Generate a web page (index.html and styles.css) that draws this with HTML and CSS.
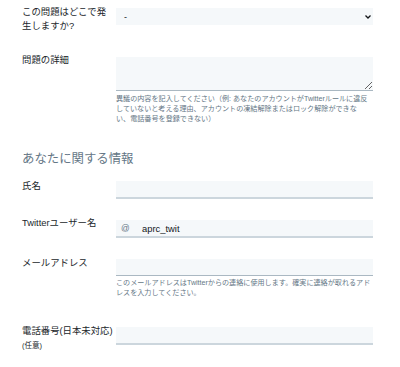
FILE: index.html
```html
<!DOCTYPE html>
<html lang="ja">
<head>
<meta charset="utf-8">
<link rel="stylesheet" href="styles.css">
</head>
<body>
<div class="form">
  <div class="row r1">
    <label class="lbl">この問題はどこで発<br>生しますか?</label>
    <div class="field f1">
      <div class="select-wrap">
        <select class="select"><option>-</option></select>
        <svg class="chev" width="6" height="4" viewBox="0 0 6 4"><path d="M0.5 0.5 L3 3 L5.5 0.5" fill="none" stroke="#14171a" stroke-width="1.3"/></svg>
      </div>
    </div>
  </div>

  <div class="row r2">
    <label class="lbl">問題の詳細</label>
    <div class="field f2">
      <textarea class="textarea"></textarea>
      <p class="help">異議の内容を記入してください（例: あなたのアカウントがTwitterルールに違反<br>していないと考える理由、アカウントの凍結解除またはロック解除ができな<br>い、電話番号を登録できない）</p>
    </div>
  </div>

  <h2 class="heading">あなたに関する情報</h2>

  <div class="row r3">
    <label class="lbl">氏名</label>
    <div class="field f3"><div class="input thick"></div></div>
  </div>

  <div class="row r4">
    <label class="lbl">Twitterユーザー名</label>
    <div class="field f4"><div class="input thick user"><span class="at">@</span><span class="uname">aprc_twit</span></div></div>
  </div>

  <div class="row r5">
    <label class="lbl">メールアドレス</label>
    <div class="field f5">
      <div class="input thin"></div>
      <p class="help h2">このメールアドレスはTwitterからの連絡に使用します。確実に連絡が取れるアド<br>レスを入力してください。</p>
    </div>
  </div>

  <div class="row r6">
    <label class="lbl">電話番号(日本未対応)<span class="opt">(任意)</span></label>
    <div class="field f6"><div class="input thick"></div></div>
  </div>
</div>
</body>
</html>
```

FILE: styles.css
```css
html, body {
  margin: 0;
  padding: 0;
  background: #ffffff;
}
body {
  font-family: "Liberation Sans", "Noto Sans CJK JP", sans-serif;
  color: #14171a;
  width: 400px;
  height: 367px;
  overflow: hidden;
}
.form {
  padding: 5px 0 0 22px;
}
.row {
  display: grid;
  grid-template-columns: 94px 257px;
  align-items: start;
}
.lbl {
  display: block;
  font-size: 9.4px;
  line-height: 14px;
  color: #22272b;
}
.opt {
  display: block;
  font-size: 7.5px;
  line-height: 16px;
}
.field {
  display: flex;
  flex-direction: column;
}
.select-wrap {
  position: relative;
  height: 17px;
}
.select {
  appearance: none;
  -webkit-appearance: none;
  display: block;
  width: 100%;
  height: 17px;
  margin: 0;
  border: none;
  background: #f5f8fa;
  padding: 0 0 0 8px;
  font-family: inherit;
  font-size: 9px;
  color: #14171a;
  outline: none;
}
.chev {
  position: absolute;
  right: 2px;
  top: 7px;
}
.f1 { margin-top: 3px; }
.r2 { margin-top: 20px; }
.f2 { margin-top: 4px; }
.textarea {
  display: block;
  box-sizing: border-box;
  width: 257px;
  height: 34px;
  margin: 0;
  border: none;
  border-bottom: 1px solid #aab8c2;
  background: #f5f8fa;
  resize: vertical;
  font-family: inherit;
  outline: none;
}
.help {
  margin: 3px 0 0 0;
  font-size: 7.1px;
  line-height: 10px;
  color: #657786;
  white-space: nowrap;
}
.heading {
  margin: 27px 0 0 0;
  font-size: 12.4px;
  line-height: 16px;
  font-weight: normal;
  color: #657786;
}
.r3 { margin-top: 12px; }
.f3 { margin-top: 2px; }
.r4 { margin-top: 17px; }
.f4 { margin-top: 4px; }
.r5 { margin-top: 18px; }
.f5 { margin-top: 3px; }
.r6 { margin-top: 26px; }
.f6 { margin-top: 3px; }
.input {
  box-sizing: border-box;
  height: 18px;
  background: #f5f8fa;
}
.thick { border-bottom: 2px solid #ccd6dd; }
.thin { border-bottom: 1px solid #aab8c2; height: 17px; }
.h2 { margin-top: 2px; }
.user {
  display: flex;
  align-items: center;
  padding-left: 5px;
  font-size: 9.4px;
}
.at {
  color: #657786;
  width: 21px;
  font-size: 8.5px;
}
.uname {
  color: #14171a;
}
```
